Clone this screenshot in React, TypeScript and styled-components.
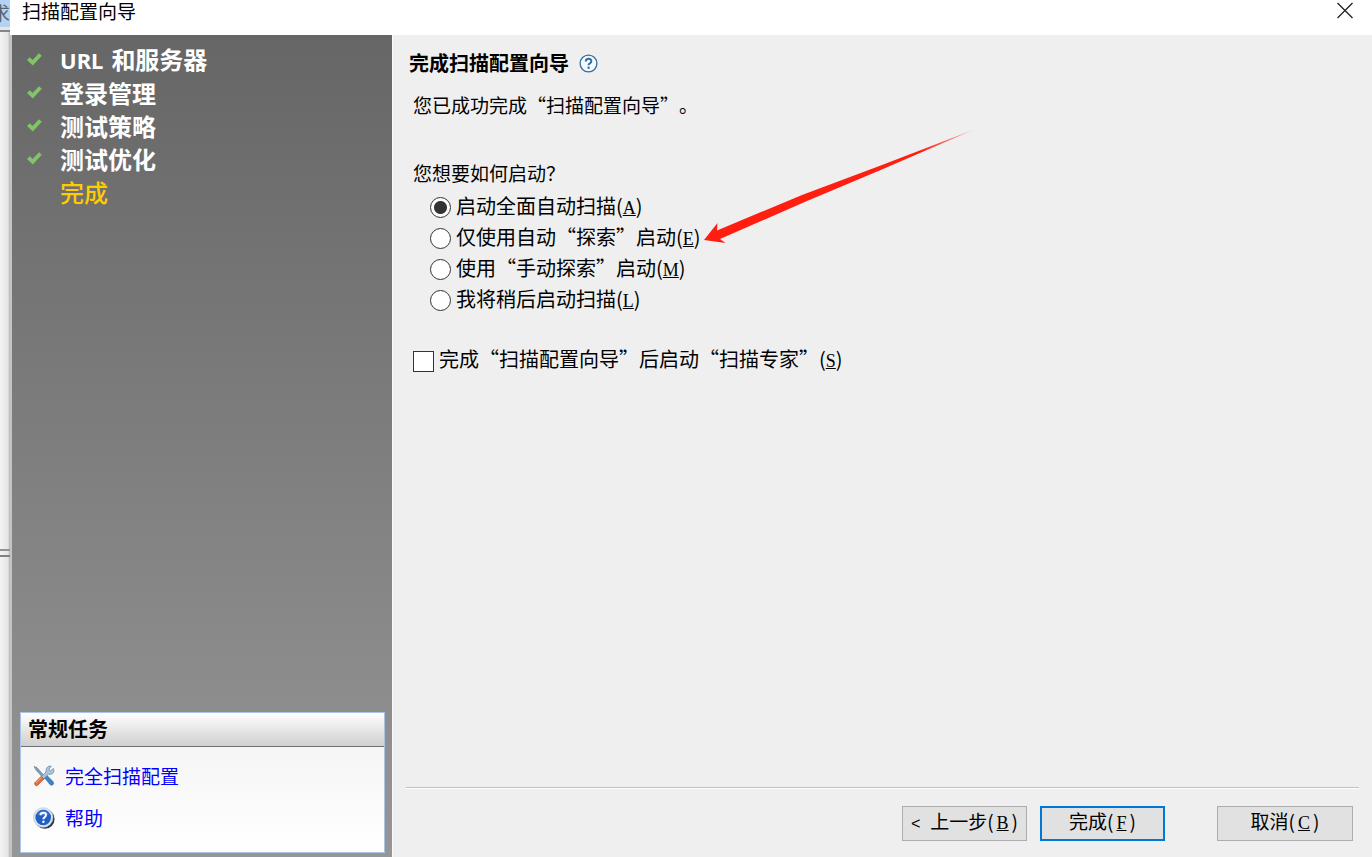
import React from "react";
import styled, { createGlobalStyle } from "styled-components";

const GlobalStyle = createGlobalStyle`
  * { box-sizing: border-box; }
  body {
    margin: 0;
    background: #efefef;
    color: #000;
    font: 19px/24px "Noto Sans CJK SC", "Liberation Sans", sans-serif;
    text-spacing-trim: space-all;
  }
`;

const Desktop = styled.div`
  display: flex;
  min-height: 100vh;
  overflow: hidden;
`;

const BackWindow = styled.div`
  display: flex;
  flex-direction: column;
  flex: none;
  width: 10px;
  overflow: hidden;
  background: linear-gradient(90deg, #f4f4f4, #e4e4e4 80%, #b4b4b4);
`;

const BackTab = styled.div`
  display: flex;
  justify-content: flex-end;
  height: 32px;
  padding-top: 1px;
  color: #566270;
  background: linear-gradient(#b5d3ee 27px, #e6e6e6 27px 30px, #858585 30px);
`;

const BackPane = styled.div<{ $grow: number }>`
  flex: ${(p) => p.$grow} 0 0;
`;

const BackSplitter = styled.div`
  height: 8px;
  border-top: 2px solid #8b939b;
  border-bottom: 2px solid #808080;
`;

const Dialog = styled.div`
  display: flex;
  flex: 1;
  flex-direction: column;
  min-width: 0;
`;

const TitleBar = styled.header`
  display: flex;
  align-items: flex-start;
  justify-content: space-between;
  height: 35px;
  padding: 0 18px 0 12px;
  background: #fff;
`;

const Title = styled.h1`
  margin: 0;
  font-size: 19px;
  font-weight: 400;
  line-height: 22px;
`;

const CloseButton = styled.button`
  display: flex;
  width: 18px;
  height: 21px;
  padding: 2px 0 0;
  border: 0;
  background: none;
`;

const Body = styled.div`
  display: flex;
  flex: 1;
`;

const Sidebar = styled.aside`
  display: flex;
  flex: none;
  flex-direction: column;
  justify-content: space-between;
  width: 383px;
  padding: 8px 7px 4px 8px;
  border-left: 2px solid #c4c4c4;
  border-right: 1px solid #fafafa;
  background: linear-gradient(#666, #969696);
`;

const Steps = styled.ol`
  margin: 0;
  padding: 0;
  list-style: none;
`;

const Step = styled.li<{ $current?: boolean }>`
  display: flex;
  align-items: center;
  height: 33px;
  padding-left: 7px;
  gap: 18px;
  color: ${(p) => (p.$current ? "#ffcc00" : "#fff")};
  font-size: 24px;
  font-weight: ${(p) => (p.$current ? 500 : 700)};
`;

const StepMark = styled.span`
  display: flex;
  width: 15px;
  height: 14px;
`;

const StepText = styled.span`
  display: flex;
  align-items: baseline;
  gap: 8px;
`;

const Latin = styled.span`
  font-family: "Noto Sans", sans-serif;
  font-size: 22px;
`;

const TaskPanel = styled.section`
  border: 1px solid #a9c4e4;
  background: linear-gradient(#f2f2f2, #fff);
`;

const TaskTitle = styled.h2`
  margin: 0;
  padding: 4px 7px 5px;
  border-bottom: 1px solid #707070;
  background: linear-gradient(#fff, #cfcfcf);
  font-size: 20px;
  line-height: 24px;
`;

const TaskList = styled.div`
  display: flex;
  flex-direction: column;
  align-items: flex-start;
  gap: 18px;
  padding: 17px 12px 22px;
`;

const TaskLink = styled.a`
  display: flex;
  align-items: center;
  gap: 10px;
  color: #0000ff;
  text-decoration: none;
`;

const Main = styled.main`
  display: flex;
  flex: 1;
  flex-direction: column;
  justify-content: space-between;
  min-width: 0;
  padding: 16px 13px 16px 13px;
`;

const Content = styled.div`
  padding-left: 7px;
`;

const HeadingRow = styled.div`
  display: flex;
  align-items: center;
  gap: 10px;
  margin-left: -4px;
`;

const Heading = styled.h2`
  margin: 0;
  font-size: 20px;
  line-height: 24px;
`;

const HelpButton = styled.button`
  display: flex;
  padding: 0;
  border: 0;
  background: none;
`;

const Intro = styled.p`
  margin: 18px 0 0;
`;

const Options = styled.fieldset`
  margin: 44px 0 0;
  padding: 0;
  border: 0;
`;

const Question = styled.legend`
  padding: 0;
  margin-bottom: 7px;
`;

const OptionRow = styled.label<{ $indent?: number }>`
  display: flex;
  align-items: flex-start;
  gap: 5px;
  height: 31px;
  padding-left: ${(p) => p.$indent ?? 0}px;
  font-size: 20px;
  line-height: 28px;
  white-space: nowrap;
`;

const Radio = styled.input`
  flex: none;
  width: 21px;
  height: 21px;
  margin: 5px 0 0;
  appearance: none;
  border: 1px solid #333;
  border-radius: 50%;
  background: #fff;
  &:checked {
    background: radial-gradient(circle, #333 6px, #fff 7px);
  }
`;

const CheckBox = styled.input`
  flex: none;
  width: 21px;
  height: 21px;
  margin: 6px 0 0;
  appearance: none;
  border: 1px solid #333;
  background: #fff;
`;

const CheckArea = styled.div`
  margin-top: 29px;
`;

const Key = styled.u<{ $roomy?: boolean }>`
  padding: 0 ${(p) => (p.$roomy ? 3 : 0)}px;
  font-family: "Liberation Serif", serif;
  font-size: 18px;
  line-height: 0;
`;

const Chevron = styled.span`
  font-family: "Liberation Mono", monospace;
  font-size: 16px;
  line-height: 0;
  white-space: pre;
`;

const Footer = styled.footer`
  display: flex;
  justify-content: flex-end;
  gap: 13px;
  padding: 18px 6px 0 0;
  border-top: 1px solid #c0c0c0;
  box-shadow: inset 0 1px #fff;
`;

const PushButton = styled.button<{ $primary?: boolean; $apart?: boolean }>`
  width: ${(p) => (p.$apart ? 136 : 125)}px;
  height: 35px;
  margin-left: ${(p) => (p.$apart ? 39 : 0)}px;
  padding: 0 0 6px;
  border: ${(p) => (p.$primary ? "2px solid #0078d7" : "1px solid #adadad")};
  background: #e1e1e1;
  color: #000;
  font: inherit;
  white-space: nowrap;
`;

const ArrowMark = styled.svg`
  position: absolute;
  top: 128px;
  left: 702px;
  pointer-events: none;
`;

function Accelerator({ letter, roomy }: { letter: string; roomy?: boolean }) {
  return (
    <span>
      (<Key $roomy={roomy}>{letter}</Key>)
    </span>
  );
}

function CheckIcon() {
  return (
    <svg width="15" height="13" viewBox="0 0 15 13" aria-hidden="true">
      <path d="M0 7 2.8 4.3 5.6 7 12 0.3 14.8 2.7 5.8 12.6Z" fill="#80c566" />
    </svg>
  );
}

function ToolsIcon() {
  return (
    <svg width="22" height="22" viewBox="0 0 22 22" aria-hidden="true">
      <path d="M1 1.5 4 2.5 13 13 11 14 3 5Z" fill="#7f9db2" stroke="#5d7c94" strokeWidth=".6" />
      <path d="M11 12 13.5 10 20 16.5Q21.5 19 19.5 20Q18 21 16.5 19Z" fill="#3f82c4" stroke="#2c659f" strokeWidth=".6" />
      <path d="M20.5 3.5Q22 8 18 9.3L15.5 9.3 10.5 14 8.3 11.8 13 7Q12.5 3 15 1.5Q17 .5 18.3 1.3L16 4 17.5 6Z" fill="#a9c5db" stroke="#6587a1" strokeWidth=".7" />
      <path d="M8.3 11.2 11 14 4.5 20.5Q1.8 21.5 1.5 18Z" fill="#e46a38" stroke="#b84920" strokeWidth=".6" />
      <path d="M3 18 9 12.3" stroke="#f5a47f" strokeWidth="1" />
    </svg>
  );
}

function HelpBadgeIcon() {
  return (
    <svg width="22" height="22" viewBox="0 0 22 22" aria-hidden="true">
      <circle cx="11.8" cy="12" r="9.8" fill="#2c3644" />
      <circle cx="10.2" cy="10.5" r="9.8" fill="#dbe3ec" stroke="#b5c3d2" strokeWidth=".6" />
      <circle cx="10.2" cy="10.5" r="7.8" fill="#225fc4" />
      <path d="M4 7Q10 1 16.3 7Q11 10 4 7" fill="#5c92df" opacity=".7" />
      <path d="M7.5 8.3Q7.5 5.7 10.3 5.7T13 8.1Q13 9.4 11.5 10.3Q10.4 11 10.4 12.2" fill="none" stroke="#fff" strokeWidth="2" />
      <circle cx="10.4" cy="14.8" r="1.2" fill="#fff" />
    </svg>
  );
}

function HelpRingIcon() {
  return (
    <svg width="19" height="19" viewBox="0 0 19 19" aria-hidden="true">
      <circle cx="9.5" cy="9.5" r="8.4" fill="#f6fafd" stroke="#336f9f" strokeWidth="1.3" />
      <path d="M6.8 7.5Q6.8 4.8 9.6 4.8T12.3 7.2Q12.3 8.5 10.8 9.3Q9.6 10 9.6 11.3" fill="none" stroke="#336f9f" strokeWidth="2" />
      <circle cx="9.6" cy="13.8" r="1.2" fill="#336f9f" />
    </svg>
  );
}

const doneSteps = [
  { latin: "URL", text: "和服务器" },
  { text: "登录管理" },
  { text: "测试策略" },
  { text: "测试优化" },
];

const startOptions = [
  { text: "启动全面自动扫描", key: "A" },
  { text: "仅使用自动“探索”启动", key: "E" },
  { text: "使用“手动探索”启动", key: "M" },
  { text: "我将稍后启动扫描", key: "L" },
];

export default function App() {
  return (
    <Desktop lang="zh-CN">
      <GlobalStyle />
      <BackWindow aria-hidden="true">
        <BackTab>求</BackTab>
        <BackPane $grow={517} />
        <BackSplitter />
        <BackPane $grow={300} />
      </BackWindow>
      <Dialog role="dialog" aria-labelledby="dialog-title">
        <TitleBar>
          <Title id="dialog-title">扫描配置向导</Title>
          <CloseButton aria-label="关闭">
            <svg width="18" height="18" viewBox="0 0 18 18">
              <path d="M1.5 1 16.5 16M16.5 1 1.5 16" stroke="#222" strokeWidth="1.3" />
            </svg>
          </CloseButton>
        </TitleBar>
        <Body>
          <Sidebar>
            <Steps>
              {doneSteps.map((step) => (
                <Step key={step.text}>
                  <StepMark><CheckIcon /></StepMark>
                  <StepText>
                    {step.latin && <Latin>{step.latin}</Latin>}
                    {step.text}
                  </StepText>
                </Step>
              ))}
              <Step $current aria-current="step">
                <StepMark />
                <StepText>完成</StepText>
              </Step>
            </Steps>
            <TaskPanel>
              <TaskTitle>常规任务</TaskTitle>
              <TaskList>
                <TaskLink href="#config"><ToolsIcon />完全扫描配置</TaskLink>
                <TaskLink href="#help"><HelpBadgeIcon />帮助</TaskLink>
              </TaskList>
            </TaskPanel>
          </Sidebar>
          <Main>
            <Content>
              <HeadingRow>
                <Heading>完成扫描配置向导</Heading>
                <HelpButton aria-label="帮助"><HelpRingIcon /></HelpButton>
              </HeadingRow>
              <Intro>您已成功完成“扫描配置向导”。</Intro>
              <Options>
                <Question>您想要如何启动？</Question>
                {startOptions.map((option, i) => (
                  <OptionRow key={option.key} $indent={17}>
                    <Radio type="radio" name="start" defaultChecked={i === 0} />
                    <span>{option.text}<Accelerator letter={option.key} /></span>
                  </OptionRow>
                ))}
              </Options>
              <CheckArea>
                <OptionRow>
                  <CheckBox type="checkbox" />
                  <span>完成“扫描配置向导”后启动“扫描专家”<Accelerator letter="S" /></span>
                </OptionRow>
              </CheckArea>
            </Content>
            <Footer>
              <PushButton><Chevron>&lt; </Chevron>上一步<Accelerator letter="B" roomy /></PushButton>
              <PushButton $primary>完成<Accelerator letter="F" roomy /></PushButton>
              <PushButton $apart>取消<Accelerator letter="C" roomy /></PushButton>
            </Footer>
          </Main>
        </Body>
      </Dialog>
      <ArrowMark width="274" height="120" viewBox="0 0 274 120" aria-hidden="true">
        <defs>
          <linearGradient id="arrow-fade" x1="0" x2="1">
            <stop offset=".8" stopColor="#ff1e10" />
            <stop offset="1" stopColor="#ff1e10" stopOpacity=".4" />
          </linearGradient>
        </defs>
        <path d="M2 112 15.5 95 15 102.5 100 67 180 37 271 2 181 41 105 73 18 111 23.5 115Z" fill="url(#arrow-fade)" />
      </ArrowMark>
    </Desktop>
  );
}
